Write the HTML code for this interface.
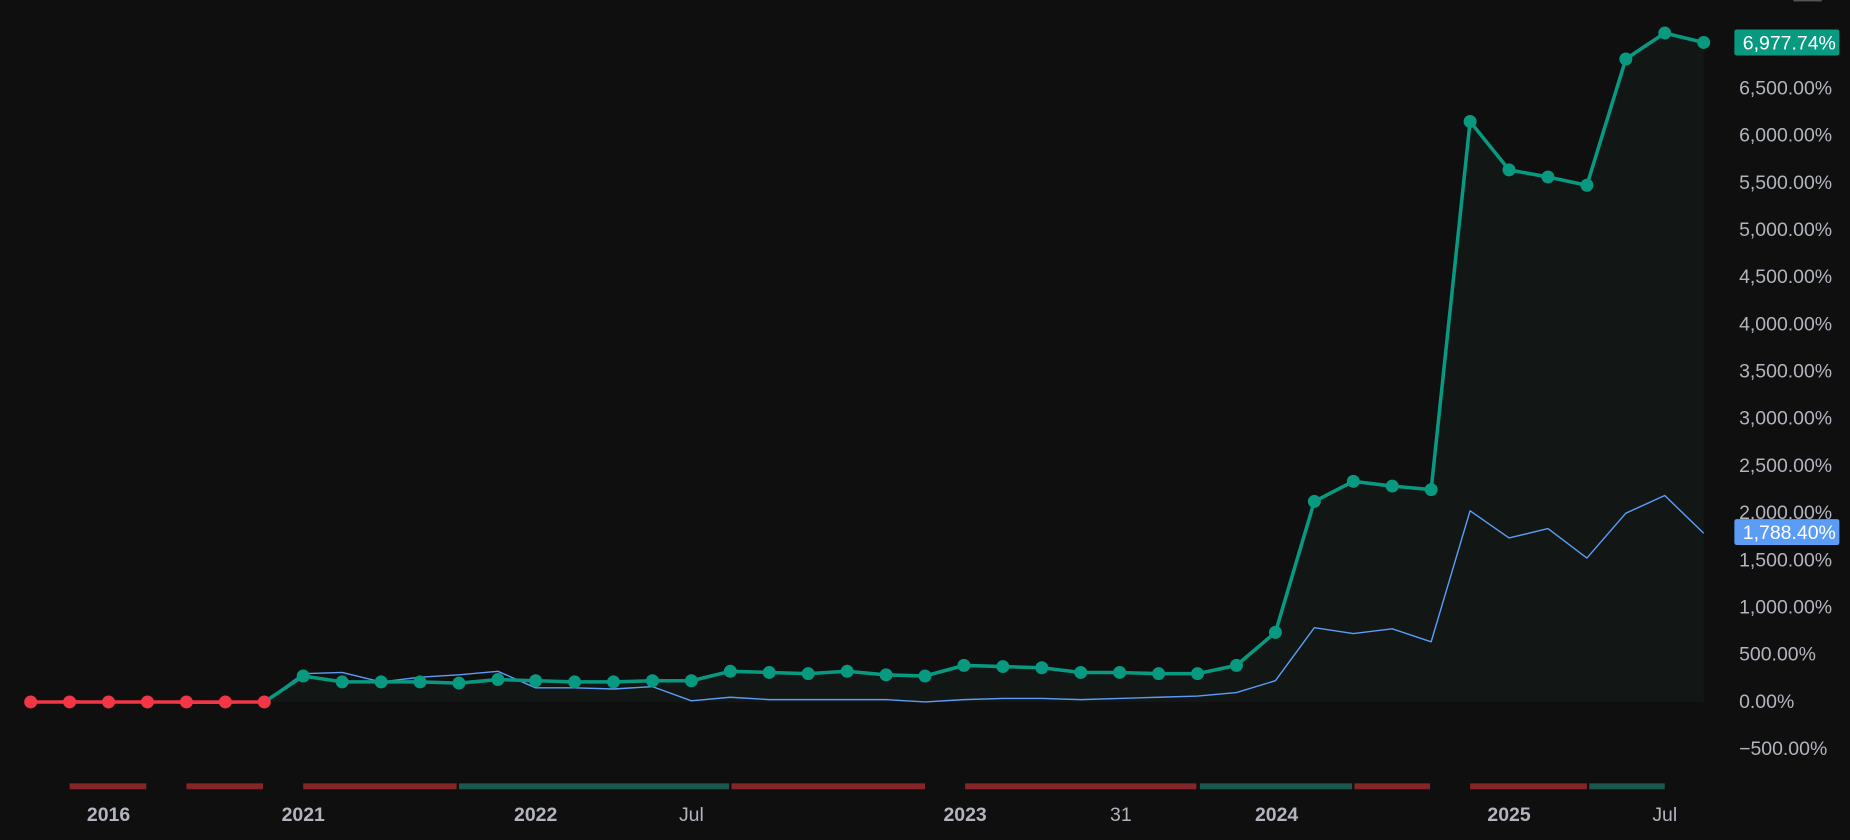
<!DOCTYPE html>
<html><head><meta charset="utf-8">
<style>
html,body{margin:0;padding:0;background:#0f0f0f;width:1850px;height:840px;overflow:hidden}
svg{display:block}
text{font-family:"Liberation Sans",sans-serif}
</style></head><body>
<svg width="1850" height="840" viewBox="0 0 1568 712" preserveAspectRatio="none">
<rect width="1568" height="712" fill="#0f0f0f"/>
<rect x="1520" y="0" width="24" height="1.2" fill="#555"/>
<polygon fill="#121716" points="224,595 257,573 290,578 323,578 356,578 389,579 422,576 454,577 487,578 520,578 553,577 586,577 619,569 652,570 685,571 718,569 751,572 784,573 817,564 850,565 883,566 916,570 949,570 982,571 1015,571 1048,564 1081,536 1114,425 1147,408 1180,412 1213,415 1246,103 1279,144 1312,150 1345,157 1378,50 1411,28 1444,36 1444,595"/>
<polyline fill="none" stroke="#5b9cf6" stroke-width="1.2" stroke-linejoin="round" points="26,595 59,594 92,595 125,595 158,596 191,596 224,595 257,571 290,570 323,578 356,574 389,572 422,569 454,583 487,583 520,584 553,582 586,594 619,591 652,593 685,593 718,593 751,593 784,595 817,593 850,592 883,592 916,593 949,592 982,591 1015,590 1048,587 1081,577 1114,532 1147,537 1180,533 1213,544 1246,433 1279,456 1312,448 1345,473 1378,435 1411,420 1444,452"/>
<polyline fill="none" stroke="#089981" stroke-width="3" stroke-linejoin="round" points="224,595 257,573 290,578 323,578 356,578 389,579 422,576 454,577 487,578 520,578 553,577 586,577 619,569 652,570 685,571 718,569 751,572 784,573 817,564 850,565 883,566 916,570 949,570 982,571 1015,571 1048,564 1081,536 1114,425 1147,408 1180,412 1213,415 1246,103 1279,144 1312,150 1345,157 1378,50 1411,28 1444,36"/>
<polyline fill="none" stroke="#f23645" stroke-width="3" points="26,595 59,595 92,595 125,595 158,595 191,595 224,595"/>
<g fill="#f23645">
<circle cx="26" cy="595" r="5.5"/><circle cx="59" cy="595" r="5.5"/><circle cx="92" cy="595" r="5.5"/><circle cx="125" cy="595" r="5.5"/><circle cx="158" cy="595" r="5.5"/><circle cx="191" cy="595" r="5.5"/><circle cx="224" cy="595" r="5.5"/>
</g>
<g fill="#089981">
<circle cx="257" cy="573" r="5.5"/><circle cx="290" cy="578" r="5.5"/><circle cx="323" cy="578" r="5.5"/><circle cx="356" cy="578" r="5.5"/><circle cx="389" cy="579" r="5.5"/><circle cx="422" cy="576" r="5.5"/><circle cx="454" cy="577" r="5.5"/><circle cx="487" cy="578" r="5.5"/><circle cx="520" cy="578" r="5.5"/><circle cx="553" cy="577" r="5.5"/><circle cx="586" cy="577" r="5.5"/><circle cx="619" cy="569" r="5.5"/><circle cx="652" cy="570" r="5.5"/><circle cx="685" cy="571" r="5.5"/><circle cx="718" cy="569" r="5.5"/><circle cx="751" cy="572" r="5.5"/><circle cx="784" cy="573" r="5.5"/><circle cx="817" cy="564" r="5.5"/><circle cx="850" cy="565" r="5.5"/><circle cx="883" cy="566" r="5.5"/><circle cx="916" cy="570" r="5.5"/><circle cx="949" cy="570" r="5.5"/><circle cx="982" cy="571" r="5.5"/><circle cx="1015" cy="571" r="5.5"/><circle cx="1048" cy="564" r="5.5"/><circle cx="1081" cy="536" r="5.5"/><circle cx="1114" cy="425" r="5.5"/><circle cx="1147" cy="408" r="5.5"/><circle cx="1180" cy="412" r="5.5"/><circle cx="1213" cy="415" r="5.5"/><circle cx="1246" cy="103" r="5.5"/><circle cx="1279" cy="144" r="5.5"/><circle cx="1312" cy="150" r="5.5"/><circle cx="1345" cy="157" r="5.5"/><circle cx="1378" cy="50" r="5.5"/><circle cx="1411" cy="28" r="5.5"/><circle cx="1444" cy="36" r="5.5"/>
</g>
<g fill="#b2b5be" font-size="16.5">
<text x="1474" y="80">6,500.00%</text>
<text x="1474" y="120">6,000.00%</text>
<text x="1474" y="160">5,500.00%</text>
<text x="1474" y="200">5,000.00%</text>
<text x="1474" y="240">4,500.00%</text>
<text x="1474" y="280">4,000.00%</text>
<text x="1474" y="320">3,500.00%</text>
<text x="1474" y="360">3,000.00%</text>
<text x="1474" y="400">2,500.00%</text>
<text x="1474" y="440">2,000.00%</text>
<text x="1474" y="480">1,500.00%</text>
<text x="1474" y="520">1,000.00%</text>
<text x="1474" y="560">500.00%</text>
<text x="1474" y="600">0.00%</text>
<text x="1474" y="640">−500.00%</text>
</g>
<rect x="1470" y="25" width="89" height="22" rx="2" fill="#089981"/>
<text x="1556" y="42" font-size="16.5" fill="#fff" text-anchor="end">6,977.74%</text>
<rect x="1470" y="440" width="89" height="22" rx="2" fill="#5b9cf6"/>
<text x="1556" y="457" font-size="16.5" fill="#fff" text-anchor="end">1,788.40%</text>
<g>
<rect x="59" y="664" width="65" height="5" fill="#862528"/>
<rect x="158" y="664" width="65" height="5" fill="#862528"/>
<rect x="257" y="664" width="130" height="5" fill="#862528"/>
<rect x="389" y="664" width="229" height="5" fill="#1b574d"/>
<rect x="620" y="664" width="164" height="5" fill="#862528"/>
<rect x="818" y="664" width="196" height="5" fill="#862528"/>
<rect x="1017" y="664" width="129" height="5" fill="#1b574d"/>
<rect x="1148" y="664" width="64" height="5" fill="#862528"/>
<rect x="1246" y="664" width="99" height="5" fill="#862528"/>
<rect x="1347" y="664" width="64" height="5" fill="#1b574d"/>
</g>
<g fill="#b2b5be" font-size="16.5" text-anchor="middle">
<text x="92" y="696" font-weight="bold">2016</text>
<text x="257" y="696" font-weight="bold">2021</text>
<text x="454" y="696" font-weight="bold">2022</text>
<text x="586" y="696">Jul</text>
<text x="818" y="696" font-weight="bold">2023</text>
<text x="950" y="696">31</text>
<text x="1082" y="696" font-weight="bold">2024</text>
<text x="1279" y="696" font-weight="bold">2025</text>
<text x="1411" y="696">Jul</text>
</g>
</svg>
</body></html>
